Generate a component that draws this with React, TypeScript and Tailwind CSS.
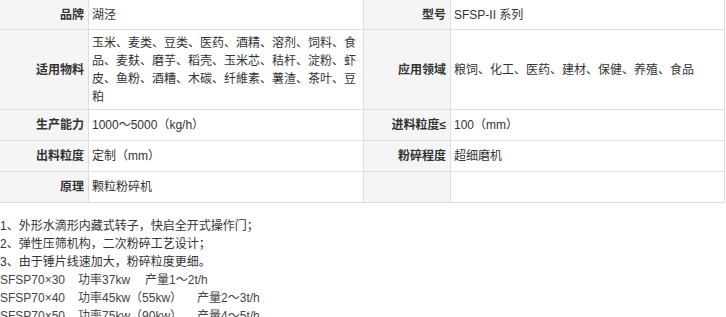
import React from 'react';

const font = { fontFamily: '"Liberation Sans", "Noto Sans CJK SC", sans-serif' };

const Label: React.FC<{ children: React.ReactNode }> = ({ children }) => (
  <div className="flex items-center justify-end bg-[#f5f5f5] border-r border-b border-[#dddddd] pr-[4px] font-bold text-[#333]">
    {children}
  </div>
);

const Value: React.FC<{ children?: React.ReactNode }> = ({ children }) => (
  <div className="flex items-center border-r border-b border-[#dddddd] pl-[3px] pr-[4px] text-[#333]">
    <div>{children}</div>
  </div>
);

const lines = [
  '1、外形水滴形内藏式转子，快启全开式操作门；',
  '2、弹性压筛机构，二次粉碎工艺设计；',
  '3、由于锤片线速加大，粉碎粒度更细。',
];

const specs = [
  ['SFSP70×30', '功率37kw', '产量1～2t/h'],
  ['SFSP70×40', '功率45kw（55kw）', '产量2～3t/h'],
  ['SFSP70×50', '功率75kw（90kw）', '产量4～5t/h'],
];

export default function App() {
  return (
    <div className="w-[726px] h-[317px] overflow-hidden bg-white text-[12px] leading-[18px]" style={font}>
      <div className="grid w-[725px] grid-cols-[89px_275px_87px_274px] grid-rows-[30px_80px_31px_31px_31px]">
        <Label>品牌</Label>
        <Value>湖泾</Value>
        <Label>型号</Label>
        <Value>SFSP-II 系列</Value>

        <Label>适用物料</Label>
        <Value>玉米、麦类、豆类、医药、酒精、溶剂、饲料、食品、麦麸、磨芋、稻壳、玉米芯、秸杆、淀粉、虾皮、鱼粉、酒糟、木碳、纤維素、薯渣、茶叶、豆粕</Value>
        <Label>应用领域</Label>
        <Value>粮饲、化工、医药、建材、保健、养殖、食品</Value>

        <Label>生产能力</Label>
        <Value>1000～5000（kg/h）</Value>
        <Label>进料粒度≤</Label>
        <Value>100（mm）</Value>

        <Label>出料粒度</Label>
        <Value>定制（mm）</Value>
        <Label>粉碎程度</Label>
        <Value>超细磨机</Value>

        <Label>原理</Label>
        <Value>颗粒粉碎机</Value>
        <Label>{''}</Label>
        <Value />
      </div>

      <div className="mt-[14px] text-[#333]">
        {lines.map((l) => (
          <p key={l}>{l}</p>
        ))}
        {specs.map(([m, p, q]) => (
          <p key={m} className="text-[#444]">
            {m}
            <span className="ml-[13px]">{p}</span>
            <span className="ml-[15px]">{q}</span>
          </p>
        ))}
      </div>
    </div>
  );
}
